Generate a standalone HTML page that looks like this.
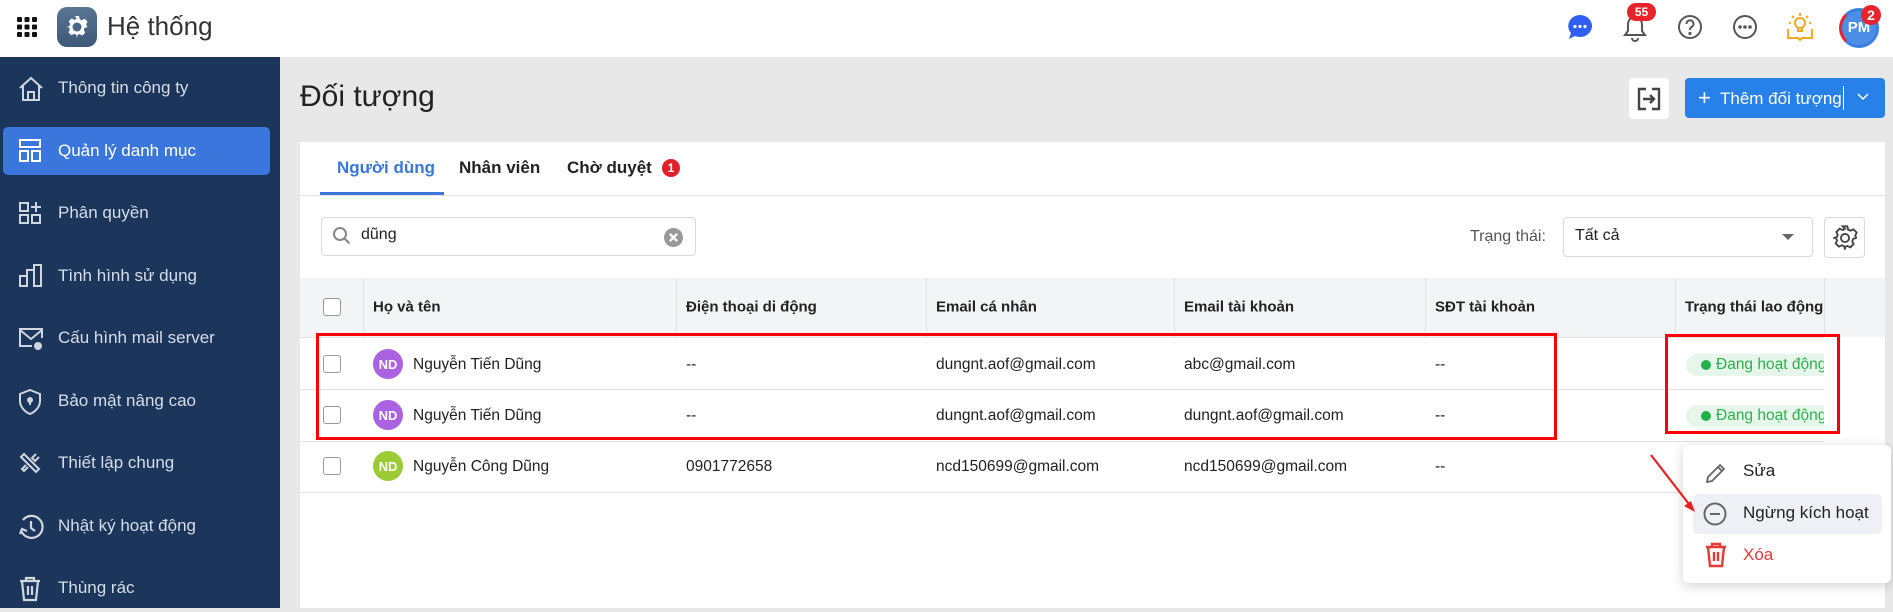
<!DOCTYPE html>
<html><head><meta charset="utf-8"><style>
*{box-sizing:border-box;margin:0;padding:0}
body{width:1893px;height:608px;overflow:hidden;font-family:"Liberation Sans","Noto Sans CJK SC",sans-serif;background:#e8e8e8;position:relative;color:#222}
.a{position:absolute}
.top{left:0;top:0;width:1893px;height:57px;background:#fff}
.side{left:0;top:57px;width:280px;height:551px;background:#1b365a}
.si{position:absolute;left:0;width:280px;height:48px;color:#d6dde8;font-size:17px;display:flex;align-items:center;padding-left:58px}
.si svg{position:absolute;left:18px;top:12px}
.card{left:300px;top:142px;width:1585px;height:466px;background:#fff}
.th{position:absolute;top:307px;font-size:15px;font-weight:bold;color:#222;transform:translateY(-50%)}
.td{position:absolute;font-size:15.5px;color:#222;transform:translateY(-50%)}
.cb{position:absolute;left:323px;width:18px;height:18px;border:1.5px solid #999;border-radius:3px;background:#fff}
.av{position:absolute;left:373px;width:30px;height:30px;border-radius:50%;color:#fff;font-weight:bold;font-size:13px;display:flex;align-items:center;justify-content:center}
.hl{position:absolute;height:1px;background:#e2e2e2;left:300px;width:1524px}
.vl{position:absolute;top:278px;height:59px;width:1px;background:#e2e2e2}
.pill{position:absolute;left:1686px;width:138px;height:22px;background:#e6f6ea;border-radius:11px 0 0 11px;color:#2fb04f;font-size:15.5px;display:flex;align-items:center;padding-left:15px;overflow:hidden;white-space:nowrap}
.pill b{width:10px;height:10px;border-radius:50%;background:#22b04a;display:inline-block;margin-right:5px;flex:none}
</style></head><body>
<div class="a top"></div>
<svg class="a" style="left:17px;top:17px" width="20" height="20" viewBox="0 0 20 20" fill="#111"><g><rect x="0" y="0" width="5" height="5" rx="1"/><rect x="7.5" y="0" width="5" height="5" rx="1"/><rect x="15" y="0" width="5" height="5" rx="1"/><rect x="0" y="7.5" width="5" height="5" rx="1"/><rect x="7.5" y="7.5" width="5" height="5" rx="1"/><rect x="15" y="7.5" width="5" height="5" rx="1"/><rect x="0" y="15" width="5" height="5" rx="1"/><rect x="7.5" y="15" width="5" height="5" rx="1"/><rect x="15" y="15" width="5" height="5" rx="1"/></g></svg>
<div class="a" style="left:57px;top:7px;width:40px;height:40px;border-radius:10px;background:linear-gradient(#5a7494,#3d5878)"></div>
<svg class="a" style="left:65px;top:15px" width="24" height="24" viewBox="0 0 24 24"><path fill="#fff" d="M10 1h4l.7 3.2 2 1 3-1.4 2.8 2.8-1.4 3 1 2L23 12v0l-3.2.7-1 2 1.4 3-2.8 2.8-3-1.4-2 1L12 23h0l-.7-3.2-2-1-3 1.4-2.8-2.8 1.4-3-1-2L1 12l3.2-.7 1-2-1.4-3L6.6 3.5l3 1.4 2-1z"/><circle cx="12" cy="12" r="4.5" fill="#4b6686"/></svg>
<div class="a" style="left:107px;top:11px;font-size:26px;color:#333">Hệ thống</div>
<svg class="a" style="left:1566px;top:13px" width="28" height="28" viewBox="0 0 28 28"><path fill="#2f5ff5" d="M14 2a12 11 0 1 1-5 21L3 26l2-6A12 11 0 0 1 14 2z"/><circle cx="9" cy="13.5" r="1.6" fill="#fff"/><circle cx="14" cy="13.5" r="1.6" fill="#fff"/><circle cx="19" cy="13.5" r="1.6" fill="#fff"/></svg>
<svg class="a" style="left:1620px;top:12px" width="30" height="32" viewBox="0 0 30 32" fill="none" stroke="#555" stroke-width="2"><path d="M15 5c-5 0-7 4-7 8v6l-3 4h20l-3-4v-6c0-4-2-8-7-8z"/><path d="M12 26a3 3 0 0 0 6 0"/></svg>
<div class="a" style="left:1627px;top:3px;width:29px;height:18px;border-radius:9px;background:#e8232b;color:#fff;font-size:12px;font-weight:bold;text-align:center;line-height:18px">55</div>
<svg class="a" style="left:1677px;top:14px" width="26" height="26" viewBox="0 0 26 26" fill="none" stroke="#555" stroke-width="2"><circle cx="13" cy="13" r="11"/><path d="M9.5 10a3.5 3.5 0 1 1 5 3c-1.3.7-1.5 1.5-1.5 3"/><circle cx="13" cy="19.5" r=".6" fill="#555"/></svg>
<svg class="a" style="top:14px;left:1732px" width="26" height="26" viewBox="0 0 26 26" fill="none" stroke="#555" stroke-width="2"><circle cx="13" cy="13" r="11"/><circle cx="8" cy="13" r=".8" fill="#555"/><circle cx="13" cy="13" r=".8" fill="#555"/><circle cx="18" cy="13" r=".8" fill="#555"/></svg>
<svg class="a" style="left:1786px;top:11px" width="28" height="30" viewBox="0 0 28 30" fill="none" stroke="#f5a623" stroke-width="2"><circle cx="14" cy="12" r="5"/><path d="M12 17v3h4v-3M14 2v3M6 5l2 2M22 5l-2 2M3 12h2M23 12h2"/><path d="M2 18v9h10l2 2 2-2h10v-9"/></svg>
<div class="a" style="left:1839px;top:8px;width:40px;height:40px;border-radius:50%;background:#4a8ee6;border:3px solid #3a7ee0;border-left-color:#e8232b;color:#fff;font-weight:bold;font-size:15px;text-align:center;line-height:34px">PM</div>
<div class="a" style="left:1861px;top:5px;width:20px;height:20px;border-radius:50%;background:#e8232b;color:#fff;font-weight:bold;font-size:14px;text-align:center;line-height:20px">2</div>

<div class="a side"></div>
<div class="si" style="top:64px"><svg width="26" height="26" viewBox="0 0 26 26" fill="none" stroke="#cfd6e0" stroke-width="2"><path d="M2 12L13 2l11 10M5 10v14h16V10M10 24v-8h6v8"/></svg>Thông tin công ty</div>
<div class="a" style="left:3px;top:127px;width:267px;height:48px;background:#3b76dc;border-radius:5px"></div>
<div class="si" style="top:127px;color:#fff"><svg width="24" height="24" viewBox="0 0 24 24" fill="none" stroke="#fff" stroke-width="2"><rect x="2" y="1" width="20" height="7"/><rect x="2" y="12" width="8" height="10"/><rect x="14" y="12" width="8" height="10"/></svg>Quản lý danh mục</div>
<div class="si" style="top:189px"><svg width="24" height="24" viewBox="0 0 24 24" fill="none" stroke="#cfd6e0" stroke-width="2"><rect x="2" y="2" width="8" height="8"/><rect x="2" y="14" width="8" height="8"/><rect x="14" y="14" width="8" height="8"/><path d="M18 1v10M13 6h10"/></svg>Phân quyền</div>
<div class="si" style="top:252px"><svg width="26" height="24" viewBox="0 0 26 24" fill="none" stroke="#cfd6e0" stroke-width="2"><path d="M2 22V12h7v10zM9 22V6h7v16M16 22V1h7v21z"/></svg>Tình hình sử dụng</div>
<div class="si" style="top:314px"><svg width="26" height="26" viewBox="0 0 26 26" fill="none" stroke="#cfd6e0" stroke-width="2"><path d="M14 20H2V3h22v9M2 4l11 9 11-9"/><circle cx="20" cy="20" r="3" fill="#cfd6e0"/></svg>Cấu hình mail server</div>
<div class="si" style="top:377px"><svg width="24" height="26" viewBox="0 0 24 26" fill="none" stroke="#cfd6e0" stroke-width="2"><path d="M12 1l10 4v7c0 6-5 11-10 13C7 23 2 18 2 12V5z"/><circle cx="12" cy="11" r="2" fill="#cfd6e0"/><path d="M12 12v4"/></svg>Bảo mật nâng cao</div>
<div class="si" style="top:439px"><svg width="24" height="24" viewBox="0 0 24 24" fill="none" stroke="#cfd6e0" stroke-width="2"><path d="M6 3l15 15-3 3L3 6zM18 3l-4 4 3 3 4-4M8 14l-4 4 2 2 4-4"/></svg>Thiết lập chung</div>
<div class="si" style="top:502px"><svg width="26" height="26" viewBox="0 0 26 26" fill="none" stroke="#cfd6e0" stroke-width="2.2"><path d="M3 16A11 11 0 1 0 5 6"/><path d="M2 20l2-5 5 2M13 7v7l4 3"/></svg>Nhật ký hoạt động</div>
<div class="si" style="top:564px"><svg width="24" height="26" viewBox="0 0 24 26" fill="none" stroke="#cfd6e0" stroke-width="2.2"><path d="M2 5h20M8 5V2h8v3M4 5l2 19h12l2-19M10 10v9M14 10v9"/></svg>Thùng rác</div>

<div class="a" style="left:300px;top:80px;font-size:30px;color:#222">Đối tượng</div>
<div class="a" style="left:1629px;top:78px;width:40px;height:41px;background:#fff;border-radius:4px"></div>
<svg class="a" style="left:1637px;top:87px" width="24" height="24" viewBox="0 0 24 24" fill="none" stroke="#444" stroke-width="2.4"><path d="M9 2H2v20h7M15 2h7v20h-7"/><path d="M6 12h11M13 8l4 4-4 4"/></svg>
<div class="a" style="left:1685px;top:78px;width:200px;height:40px;background:#2781e8;border-radius:4px;color:#fff;font-size:17px;line-height:40px;padding-left:13px"><span style="font-size:22px;vertical-align:-1px">+</span>&nbsp; Thêm đối tượng</div>
<div class="a" style="left:1843px;top:86px;width:1px;height:24px;background:#fff"></div>
<svg class="a" style="left:1857px;top:92px" width="12" height="10" viewBox="0 0 12 10" fill="none" stroke="#fff" stroke-width="1.5"><path d="M1 2l5 5 5-5"/></svg>

<div class="a card"></div>
<div class="a" style="left:337px;top:158px;font-size:17px;font-weight:bold;color:#3a76dc">Người dùng</div>
<div class="a" style="left:459px;top:158px;font-size:17px;font-weight:bold;color:#222">Nhân viên</div>
<div class="a" style="left:567px;top:158px;font-size:17px;font-weight:bold;color:#222">Chờ duyệt</div>
<div class="a" style="left:662px;top:159px;width:18px;height:18px;border-radius:50%;background:#e0212c;color:#fff;font-size:12px;font-weight:bold;text-align:center;line-height:18px">1</div>
<div class="a" style="left:320px;top:192px;width:124px;height:3px;background:#3b76dc"></div>
<div class="a" style="left:300px;top:195px;width:1585px;height:1px;background:#e2e2e2"></div>

<div class="a" style="left:321px;top:217px;width:375px;height:39px;border:1px solid #d9d9d9;border-radius:4px"></div>
<svg class="a" style="left:332px;top:226px" width="20" height="20" viewBox="0 0 20 20" fill="none" stroke="#888" stroke-width="2"><circle cx="8" cy="8" r="6"/><path d="M12.5 12.5l5 5"/></svg>
<div class="a" style="left:361px;top:226px;font-size:16px;color:#222">dũng</div>
<div class="a" style="left:664px;top:228px;width:19px;height:19px;border-radius:50%;background:#999"></div>
<svg class="a" style="left:664px;top:228px" width="19" height="19" viewBox="0 0 18 18" stroke="#fff" stroke-width="2.2"><path d="M5.5 5.5l7 7M12.5 5.5l-7 7"/></svg>

<div class="a" style="left:1470px;top:228px;font-size:16px;color:#555">Trạng thái:</div>
<div class="a" style="left:1563px;top:217px;width:250px;height:40px;border:1px solid #d9d9d9;border-radius:4px;font-size:16px;padding:9px 11px;color:#222">Tất cả</div>
<div class="a" style="left:1782px;top:234px;border-left:6px solid transparent;border-right:6px solid transparent;border-top:6px solid #666"></div>
<div class="a" style="left:1824px;top:217px;width:41px;height:41px;border:1px solid #d9d9d9;border-radius:4px"></div>
<svg class="a" style="left:1831px;top:224px" width="28" height="28" viewBox="0 0 24 24" fill="none" stroke="#444" stroke-width="1.6"><path d="M10 2h4l.6 2.8 2 1 2.6-1.2 2.8 2.8-1.2 2.6 1 2L22 12v0l-2.8.6-1 2 1.2 2.6-2.8 2.8-2.6-1.2-2 1L12 22h0l-.6-2.8-2-1-2.6 1.2-2.8-2.8 1.2-2.6-1-2L2 12l2.8-.6 1-2-1.2-2.6L7.4 4l2.6 1.2 2-1z"/><circle cx="12" cy="12" r="3.5"/></svg>

<div class="a" style="left:300px;top:278px;width:1524px;height:59px;background:#f3f4f6"></div>
<div class="a" style="left:1824px;top:278px;width:61px;height:59px;background:#f3f4f6"></div>
<div class="vl" style="left:363px"></div><div class="vl" style="left:676px"></div><div class="vl" style="left:926px"></div><div class="vl" style="left:1174px"></div><div class="vl" style="left:1425px"></div><div class="vl" style="left:1675px"></div><div class="vl" style="left:1824px"></div>
<div class="cb" style="top:298px"></div>
<div class="th" style="left:373px">Họ và tên</div>
<div class="th" style="left:686px">Điện thoại di động</div>
<div class="th" style="left:936px">Email cá nhân</div>
<div class="th" style="left:1184px">Email tài khoản</div>
<div class="th" style="left:1435px">SĐT tài khoản</div>
<div class="th" style="left:1685px;width:139px;overflow:hidden;white-space:nowrap">Trạng thái lao động</div>
<div class="hl" style="top:337px"></div><div class="hl" style="top:389px"></div><div class="hl" style="top:441px"></div><div class="hl" style="top:492px"></div>

<div class="cb" style="top:355px"></div>
<div class="av" style="top:349px;background:#ab62e0">ND</div>
<div class="td" style="left:413px;top:365px">Nguyễn Tiến Dũng</div>
<div class="td" style="left:686px;top:365px">--</div>
<div class="td" style="left:936px;top:365px">dungnt.aof@gmail.com</div>
<div class="td" style="left:1184px;top:365px">abc@gmail.com</div>
<div class="td" style="left:1435px;top:365px">--</div>
<div class="pill" style="top:354px"><b></b>Đang hoạt động</div>

<div class="cb" style="top:406px"></div>
<div class="av" style="top:400px;background:#ab62e0">ND</div>
<div class="td" style="left:413px;top:416px">Nguyễn Tiến Dũng</div>
<div class="td" style="left:686px;top:416px">--</div>
<div class="td" style="left:936px;top:416px">dungnt.aof@gmail.com</div>
<div class="td" style="left:1184px;top:416px">dungnt.aof@gmail.com</div>
<div class="td" style="left:1435px;top:416px">--</div>
<div class="pill" style="top:405px"><b></b>Đang hoạt động</div>

<div class="cb" style="top:457px"></div>
<div class="av" style="top:451px;background:#9ccb36">ND</div>
<div class="td" style="left:413px;top:467px">Nguyễn Công Dũng</div>
<div class="td" style="left:686px;top:467px">0901772658</div>
<div class="td" style="left:936px;top:467px">ncd150699@gmail.com</div>
<div class="td" style="left:1184px;top:467px">ncd150699@gmail.com</div>
<div class="td" style="left:1435px;top:467px">--</div>

<div class="a" style="left:316px;top:333px;width:1241px;height:107px;border:3px solid #f00"></div>
<div class="a" style="left:1665px;top:334px;width:175px;height:100px;border:3px solid #f00"></div>

<div class="a" style="left:1683px;top:445px;width:208px;height:138px;background:#fff;border-radius:6px;box-shadow:0 3px 12px rgba(0,0,0,.18)"></div>
<svg class="a" style="left:1705px;top:462px" width="22" height="22" viewBox="0 0 22 22" fill="none" stroke="#666" stroke-width="1.8"><path d="M2 20l1-5L15 3l4 4L7 19zM13 5l4 4"/></svg>
<div class="a" style="left:1743px;top:461px;font-size:17px;color:#222">Sửa</div>
<div class="a" style="left:1693px;top:494px;width:189px;height:40px;background:#eff0f5;border-radius:5px"></div>
<svg class="a" style="left:1703px;top:502px" width="24" height="24" viewBox="0 0 24 24" fill="none" stroke="#666" stroke-width="2"><circle cx="12" cy="12" r="10.5"/><path d="M7 12h10"/></svg>
<div class="a" style="left:1743px;top:503px;font-size:17px;color:#222">Ngừng kích hoạt</div>
<svg class="a" style="left:1705px;top:542px" width="22" height="26" viewBox="0 0 22 26" fill="none" stroke="#e53935" stroke-width="2.4"><path d="M1 5h20M7 5V2h8v3M3 5l2 19h12l2-19M9 10v9M13 10v9"/></svg>
<div class="a" style="left:1743px;top:545px;font-size:17px;color:#e53935">Xóa</div>
<svg class="a" style="left:1645px;top:450px" width="55" height="68" viewBox="0 0 55 68"><path d="M6 5L47 58" stroke="#e82020" stroke-width="2.2"/><path d="M50 62l-11-6 7-5z" fill="#e82020"/></svg>
</body></html>
